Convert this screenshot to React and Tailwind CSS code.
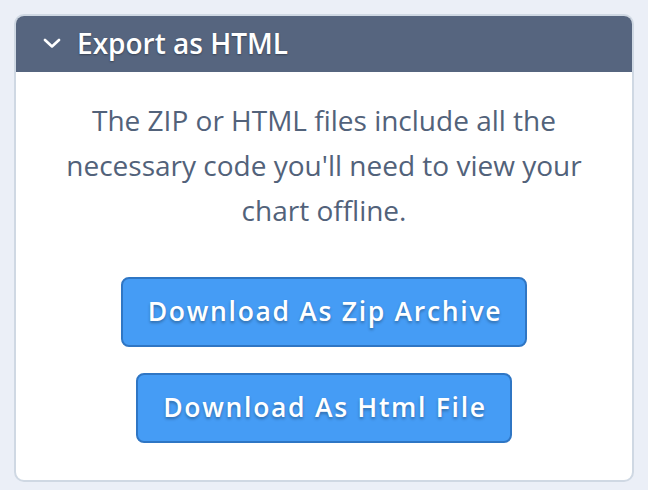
export default function App() {
  return (
    <div className="w-[648px] h-[490px] bg-[#ebeff7] pt-[14px] px-[14px] overflow-hidden" style={{ fontFamily: '"Open Sans", sans-serif' }}>
      <div className="w-[620px] h-[468px] rounded-[10px] border-2 border-[#cfd8e3] bg-white overflow-hidden flex flex-col">
        <div className="h-[58px] -mx-[2px] -mt-[2px] bg-[#56657f] flex items-center pl-[29px] gap-[16px] shrink-0">
          <svg width="18" height="10" viewBox="0 0 18 10" fill="none" stroke="white" strokeWidth="2.6" strokeLinecap="round" strokeLinejoin="round">
            <path d="M2 2 L9 8.5 L16 2" />
          </svg>
          <span className="text-white text-[28px] font-semibold [text-shadow:0_1px_2px_rgba(0,0,0,0.35)]">Export as HTML</span>
        </div>
        <p className="text-center text-[#52627a] text-[28px] leading-[45px] px-[40px] pt-[26px]">
          The ZIP or HTML files include all the necessary code you'll need to view your chart offline.
        </p>
        <div className="flex flex-col items-center gap-[26px] mt-[44px]">
          <button className="h-[70px] pl-[25px] pr-[23px] rounded-[8px] border-2 border-[#2f76c4] bg-[#459cf5] text-white text-[26.5px] font-semibold tracking-[1.7px] [text-shadow:0_2px_3px_rgba(0,0,0,0.3)]">
            Download As Zip Archive
          </button>
          <button className="h-[70px] pl-[25px] pr-[23px] rounded-[8px] border-2 border-[#2f76c4] bg-[#459cf5] text-white text-[26.5px] font-semibold tracking-[1.7px] [text-shadow:0_2px_3px_rgba(0,0,0,0.3)]">
            Download As Html File
          </button>
        </div>
      </div>
    </div>
  );
}
